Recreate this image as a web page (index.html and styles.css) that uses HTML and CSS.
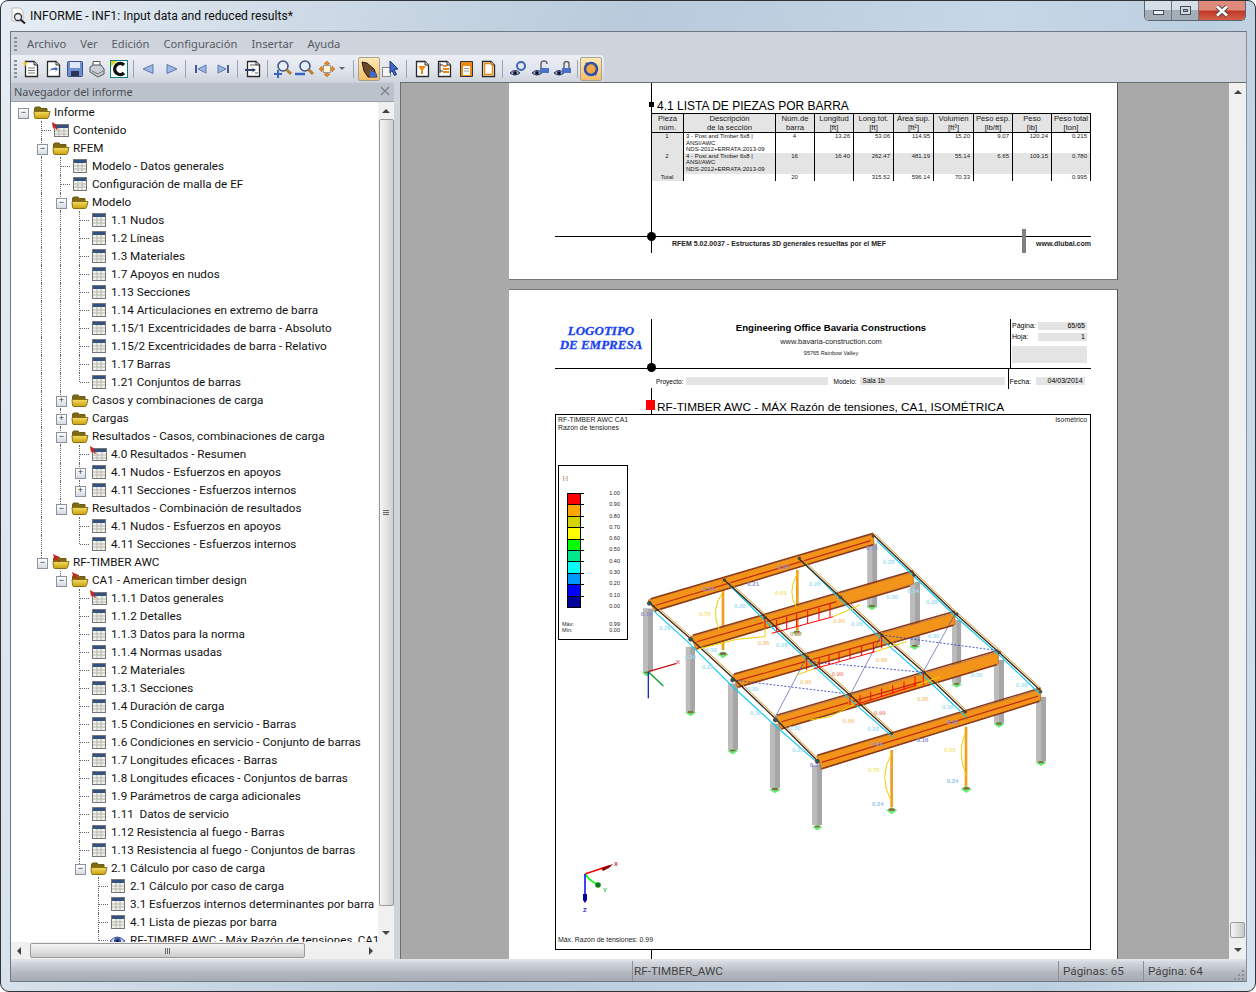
FILE: index.html
```html
<!DOCTYPE html>
<html lang="es">
<head>
<meta charset="utf-8">
<title>INFORME</title>
<link rel="stylesheet" href="styles.css">
</head>
<body>
<svg class="defs" width="0" height="0">
  <defs>
    <linearGradient id="gold" x1="0" y1="0" x2="0" y2="1"><stop offset="0" stop-color="#f6dc62"/><stop offset="1" stop-color="#c9a20e"/></linearGradient>
    <symbol id="tbl" viewBox="0 0 18 16"><rect x="2.500" y="1.500" width="13" height="13" fill="#f2f2ec" stroke="#777"/><rect x="3" y="2" width="12" height="3" fill="#34527f"/><path d="M3 8h12M3 11h12M7 5v9M11 5v9" stroke="#b5b5ad" fill="none"/></symbol>
    <symbol id="pin" viewBox="0 0 18 16"><rect x="2.500" y="2.500" width="14" height="12" fill="#f2f2ec" stroke="#777"/><rect x="3" y="3" width="13" height="3" fill="#34527f"/><path d="M3 9h13M3 12h13M7 6v8M12 6v8" stroke="#b5b5ad" fill="none"/><path d="M0 0l5 3-2 1 3 3-1 1-3-3-1 2z" fill="#d02020"/></symbol>
    <symbol id="fold" viewBox="0 0 18 16"><path d="M1.500 5Q1.500 3 3 3H7L8.500 4.500H14V8H1.500z" fill="#7f6a14" stroke="#6b5a12"/><path d="M1 7.500H17L15.500 13.500Q15 14.500 14 14.500H3Q1.800 14.500 1.500 13.500z" fill="url(#gold)" stroke="#87711a"/></symbol>
    <symbol id="foldp" viewBox="0 0 18 16"><path d="M1.500 5Q1.500 3 3 3H7L8.500 4.500H14V8H1.500z" fill="#7f6a14" stroke="#6b5a12"/><path d="M1 7.500H17L15.500 13.500Q15 14.500 14 14.500H3Q1.800 14.500 1.500 13.500z" fill="url(#gold)" stroke="#87711a"/><path d="M1 0l6 3-2 1 3 3-1 1-3-3-1 2z" fill="#d02020"/></symbol>
    <symbol id="eye" viewBox="0 0 18 16"><path d="M1 9q7-8 15 0q-8 7-15 0z" fill="#c9d8ee" stroke="#3a4f8f"/><circle cx="8.500" cy="9" r="3.500" fill="#3a56a8"/><circle cx="8.500" cy="9" r="1.300" fill="#111"/></symbol>
    <symbol id="doc" viewBox="0 0 18 18"><path d="M3.500 1.500H12L15.500 5V16.500H3.500z" fill="#fff" stroke="#2a2a2a" stroke-width="1.300"/><path d="M12 1.500V5H15.500" fill="#ddd" stroke="#2a2a2a"/></symbol>
    <symbol id="mag" viewBox="0 0 18 18"><circle cx="9" cy="6" r="5" fill="#e6edf6" stroke="#3d4f7a" stroke-width="1.500"/><path d="M12.500 9.500l4.500 4.500" stroke="#b08030" stroke-width="3"/></symbol>
    <symbol id="eyet" viewBox="0 0 20 18"><path d="M1 13q5-5 10 0q-5 4-10 0z" fill="#8ea3d6" stroke="#25305f"/><circle cx="6" cy="13" r="1.800" fill="#111"/></symbol>
    <symbol id="col" viewBox="0 0 30 200" preserveAspectRatio="none"><rect x="0" y="0" width="30" height="200" fill="#a6a6a6"/><rect x="0" y="0" width="15" height="200" fill="#bcbcbc"/></symbol>
    <symbol id="foot" viewBox="0 0 36 24" preserveAspectRatio="none"><path d="M18 2L35 11 18 23 1 11z" fill="#66ee77"/><ellipse cx="18" cy="9" rx="10" ry="4" fill="#8a6a4a"/></symbol>
  </defs>
</svg>
<div class="win">
  <header class="title">
    <svg class="appico" width="18" height="18" viewBox="0 0 18 18"><path d="M2 1H10L13 4V14H2z" fill="#fff" stroke="#bbb"/><circle cx="8" cy="10" r="3.500" fill="#e8eef6" stroke="#333" stroke-width="1.300"/><path d="M10.500 12.500L15 16.500" stroke="#222" stroke-width="2"/></svg>
    <span class="title-text">INFORME - INF1: Input data and reduced results*</span>
    <div class="winbtns">
      <div class="wb wb-min"><i></i></div>
      <div class="wb wb-max"><i></i></div>
      <div class="wb wb-close">
        <svg width="18" height="12" viewBox="0 0 18 12"><path d="M4 1.500L14 10.500M14 1.500L4 10.500" stroke="#4a4a4a" stroke-width="4.500"/><path d="M4 1.500L14 10.500M14 1.500L4 10.500" stroke="#fff" stroke-width="2.600"/></svg>
      </div>
    </div>
  </header>
  <div class="inner">
    <nav class="menu">
      <span class="grip"></span>
      <span>Archivo</span><span>Ver</span><span>Edición</span><span>Configuración</span><span>Insertar</span><span>Ayuda</span>
    </nav>
    <div class="tools">
      <span class="grip"></span>
      <button class="tb"><svg width="18" height="18"><use href="#doc"/><path d="M3 1l1 2 2 .5-2 1-1 2-1-2-2-1 2-.5z" fill="#f4d020"/><path d="M6 8h7M6 10.500h7M6 13h7" stroke="#777"/></svg></button>
      <button class="tb"><svg width="18" height="18"><use href="#doc"/><path d="M5 11q3-4 7-3l-1-2 3 3-3 3 1-2q-4-1-7 1z" fill="#3c68b4"/></svg></button>
      <button class="tb"><svg width="18" height="18" viewBox="0 0 18 18"><rect x="1.500" y="1.500" width="15" height="15" rx="1" fill="#6f8fd0" stroke="#3c4f80"/><rect x="4" y="2" width="10" height="6" fill="#dfe7f6"/><rect x="5" y="11" width="8" height="5" fill="#2b3556"/></svg></button>
      <button class="tb"><svg width="18" height="18" viewBox="0 0 18 18"><path d="M5 1.500H12V7H5z" fill="#fff" stroke="#555"/><path d="M2 7L5 5H13L16 9V14L10 17 2 12z" fill="#c9ced6" stroke="#555"/><path d="M4 11l6 3 5-3" stroke="#777" fill="none"/></svg></button>
      <button class="tb"><svg width="18" height="18" viewBox="0 0 18 18"><rect x=".5" y=".5" width="17" height="17" fill="#fff" stroke="#0b7f78"/><path d="M14 5A5.500 5.500 0 1 0 14 13" fill="none" stroke="#111" stroke-width="3.500"/><path d="M1 1h6L1 7z" fill="#d8d820"/></svg></button>
      <i class="sep"></i>
      <button class="tb"><svg width="18" height="18" viewBox="0 0 18 18"><path d="M3 9L13 4.500V13.500z" fill="#9db8e4" stroke="#5a78b0"/></svg></button>
      <button class="tb"><svg width="18" height="18" viewBox="0 0 18 18"><path d="M15 9L5 4.500V13.500z" fill="#9db8e4" stroke="#5a78b0"/></svg></button>
      <i class="sep"></i>
      <button class="tb"><svg width="18" height="18" viewBox="0 0 18 18"><path d="M4 5V13" stroke="#44598f" stroke-width="2"/><path d="M6 9L14 5V13z" fill="#9db8e4" stroke="#5a78b0"/></svg></button>
      <button class="tb"><svg width="18" height="18" viewBox="0 0 18 18"><path d="M14 5V13" stroke="#44598f" stroke-width="2"/><path d="M12 9L4 5V13z" fill="#9db8e4" stroke="#5a78b0"/></svg></button>
      <i class="sep"></i>
      <button class="tb"><svg width="18" height="18"><use href="#doc"/><path d="M1 9h8l-2-2 5 3-5 3 2-2H1z" fill="#2d3f6b"/><path d="M6 5h6M11 13h3" stroke="#555"/></svg></button>
      <i class="sep"></i>
      <button class="tb"><svg width="20" height="18"><use href="#mag"/><path d="M1 14h8M5 10v8" stroke="#3565c0" stroke-width="2"/></svg></button>
      <button class="tb"><svg width="20" height="18"><use href="#mag"/><path d="M0 14h10" stroke="#3565c0" stroke-width="2.500"/></svg></button>
      <button class="tb tb-drop"><svg width="18" height="18" viewBox="0 0 18 18"><path d="M9 1l3 3h-2v2H8V4H6zM9 17l-3-3h2v-2h2v2h2zM1 9l3-3v2h2v2H4v2zM17 9l-3 3v-2h-2V8h2V6z" fill="#ea8a1e" stroke="#a85a10" stroke-width=".5"/><rect x="5.500" y="5.500" width="7" height="7" fill="#fff3d8" stroke="#999"/></svg><i class="caret"></i></button>
      <i class="sep"></i>
      <button class="tb tb-on"><svg width="20" height="20" viewBox="0 0 20 20"><path d="M3 3l5 1 7 6 3 8H9L5 12z" fill="#6a4a2a" stroke="#2b1c10" stroke-width="1"/><path d="M11 11l6 3 1 4h-7z" fill="#3f69c8"/></svg></button>
      <button class="tb"><svg width="20" height="18" viewBox="0 0 20 18"><rect x="1.500" y="7.500" width="8" height="9" fill="#f4f4f4" stroke="#888"/><path d="M9 1l8 8-4 .5 2.500 5-2 1-2.500-5L9 13z" fill="#3f69c8" stroke="#1f3878"/></svg></button>
      <i class="sep sep-w"></i>
      <button class="tb"><svg width="18" height="18"><use href="#doc"/><path d="M5 6h8L10 10v4H8v-4z" fill="#ee8a12"/></svg></button>
      <button class="tb"><svg width="18" height="18"><use href="#doc"/><path d="M5 3v10M5 5h3M5 11h3" stroke="#333"/><rect x="8" y="8" width="6" height="2" fill="#e88a1a"/><rect x="8" y="11" width="6" height="2" fill="#e88a1a"/><rect x="8" y="5" width="4" height="2" fill="#e88a1a"/></svg></button>
      <button class="tb"><svg width="18" height="18" viewBox="0 0 18 18"><path d="M3.500 1.500H15.500V16.500H3.500z" fill="#ee8a12" stroke="#333"/><path d="M6 6h7v9H6z" fill="#fff"/><path d="M7 8.500h5M7 11h5" stroke="#999"/></svg></button>
      <button class="tb"><svg width="18" height="18"><use href="#doc"/><path d="M5.500 3.500H11.500L13.500 5.500V14.500H5.500z" fill="#fff" stroke="#ee8a12" stroke-width="1.500"/></svg></button>
      <i class="sep sep-e"></i>
      <button class="tb"><svg width="20" height="18"><use href="#eyet"/><circle cx="12" cy="6" r="4" fill="none" stroke="#3c68b4" stroke-width="2"/></svg></button>
      <button class="tb"><svg width="20" height="18"><use href="#eyet"/><path d="M9 8h9v5H9z" fill="#4a72c8"/><path d="M10 8V4a3 3 0 0 1 6 0" fill="none" stroke="#666" stroke-width="1.500"/></svg></button>
      <button class="tb"><svg width="20" height="18"><use href="#eyet"/><path d="M9 8h9v5H9z" fill="#4a72c8"/><path d="M11 8V4a2.500 2.500 0 0 1 5 0V8" fill="none" stroke="#666" stroke-width="1.500"/></svg></button>
      <i class="sep sep-z"></i>
      <button class="tb tb-on"><svg width="18" height="18" viewBox="0 0 18 18"><circle cx="9" cy="9" r="6" fill="#f4a640" stroke="#2d50a8" stroke-width="2.500"/><path d="M4 2l3 3-4 1zM14 16l-3-3 4-1z" fill="#2d50a8"/></svg></button>
    </div>
    <div class="main">
      <aside class="nav">
        <div class="nav-head"><span>Navegador del informe</span><svg width="10" height="10" viewBox="0 0 10 10"><path d="M1 1l8 8M9 1l-8 8" stroke="#7d828a" stroke-width="1.300"/></svg></div>
        <div class="nav-body">
          <div class="tree">
            <div class="row"><i class="r"></i><svg class="ic"><use href="#fold"/></svg><span>Informe</span></div>
            <div class="row"><i class="g"></i><i class="t"></i><svg class="ic"><use href="#pin"/></svg><span>Contenido</span></div>
            <div class="row"><i class="g"></i><i class="m"></i><svg class="ic"><use href="#fold"/></svg><span>RFEM</span></div>
            <div class="row"><i class="g"></i><i class="v"></i><i class="t"></i><svg class="ic"><use href="#tbl"/></svg><span>Modelo - Datos generales</span></div>
            <div class="row"><i class="g"></i><i class="v"></i><i class="t"></i><svg class="ic"><use href="#tbl"/></svg><span>Configuración de malla de EF</span></div>
            <div class="row"><i class="g"></i><i class="v"></i><i class="m"></i><svg class="ic"><use href="#fold"/></svg><span>Modelo</span></div>
            <div class="row"><i class="g"></i><i class="v"></i><i class="v"></i><i class="t"></i><svg class="ic"><use href="#tbl"/></svg><span>1.1 Nudos</span></div>
            <div class="row"><i class="g"></i><i class="v"></i><i class="v"></i><i class="t"></i><svg class="ic"><use href="#tbl"/></svg><span>1.2 Líneas</span></div>
            <div class="row"><i class="g"></i><i class="v"></i><i class="v"></i><i class="t"></i><svg class="ic"><use href="#tbl"/></svg><span>1.3 Materiales</span></div>
            <div class="row"><i class="g"></i><i class="v"></i><i class="v"></i><i class="t"></i><svg class="ic"><use href="#tbl"/></svg><span>1.7 Apoyos en nudos</span></div>
            <div class="row"><i class="g"></i><i class="v"></i><i class="v"></i><i class="t"></i><svg class="ic"><use href="#tbl"/></svg><span>1.13 Secciones</span></div>
            <div class="row"><i class="g"></i><i class="v"></i><i class="v"></i><i class="t"></i><svg class="ic"><use href="#tbl"/></svg><span>1.14 Articulaciones en extremo de barra</span></div>
            <div class="row"><i class="g"></i><i class="v"></i><i class="v"></i><i class="t"></i><svg class="ic"><use href="#tbl"/></svg><span>1.15/1 Excentricidades de barra - Absoluto</span></div>
            <div class="row"><i class="g"></i><i class="v"></i><i class="v"></i><i class="t"></i><svg class="ic"><use href="#tbl"/></svg><span>1.15/2 Excentricidades de barra - Relativo</span></div>
            <div class="row"><i class="g"></i><i class="v"></i><i class="v"></i><i class="t"></i><svg class="ic"><use href="#tbl"/></svg><span>1.17 Barras</span></div>
            <div class="row"><i class="g"></i><i class="v"></i><i class="v"></i><i class="l"></i><svg class="ic"><use href="#tbl"/></svg><span>1.21 Conjuntos de barras</span></div>
            <div class="row"><i class="g"></i><i class="v"></i><i class="p"></i><svg class="ic"><use href="#fold"/></svg><span>Casos y combinaciones de carga</span></div>
            <div class="row"><i class="g"></i><i class="v"></i><i class="p"></i><svg class="ic"><use href="#fold"/></svg><span>Cargas</span></div>
            <div class="row"><i class="g"></i><i class="v"></i><i class="m"></i><svg class="ic"><use href="#fold"/></svg><span>Resultados - Casos, combinaciones de carga</span></div>
            <div class="row"><i class="g"></i><i class="v"></i><i class="v"></i><i class="t"></i><svg class="ic"><use href="#pin"/></svg><span>4.0 Resultados - Resumen</span></div>
            <div class="row"><i class="g"></i><i class="v"></i><i class="v"></i><i class="p"></i><svg class="ic"><use href="#tbl"/></svg><span>4.1 Nudos - Esfuerzos en apoyos</span></div>
            <div class="row"><i class="g"></i><i class="v"></i><i class="v"></i><i class="lp"></i><svg class="ic"><use href="#tbl"/></svg><span>4.11 Secciones - Esfuerzos internos</span></div>
            <div class="row"><i class="g"></i><i class="v"></i><i class="ml"></i><svg class="ic"><use href="#fold"/></svg><span>Resultados - Combinación de resultados</span></div>
            <div class="row"><i class="g"></i><i class="v"></i><i class="g"></i><i class="t"></i><svg class="ic"><use href="#tbl"/></svg><span>4.1 Nudos - Esfuerzos en apoyos</span></div>
            <div class="row"><i class="g"></i><i class="v"></i><i class="g"></i><i class="l"></i><svg class="ic"><use href="#tbl"/></svg><span>4.11 Secciones - Esfuerzos internos</span></div>
            <div class="row"><i class="g"></i><i class="ml"></i><svg class="ic"><use href="#foldp"/></svg><span>RF-TIMBER AWC</span></div>
            <div class="row"><i class="g"></i><i class="g"></i><i class="ml"></i><svg class="ic"><use href="#foldp"/></svg><span>CA1 - American timber design</span></div>
            <div class="row"><i class="g"></i><i class="g"></i><i class="g"></i><i class="t"></i><svg class="ic"><use href="#pin"/></svg><span>1.1.1 Datos generales</span></div>
            <div class="row"><i class="g"></i><i class="g"></i><i class="g"></i><i class="t"></i><svg class="ic"><use href="#tbl"/></svg><span>1.1.2 Detalles</span></div>
            <div class="row"><i class="g"></i><i class="g"></i><i class="g"></i><i class="t"></i><svg class="ic"><use href="#tbl"/></svg><span>1.1.3 Datos para la norma</span></div>
            <div class="row"><i class="g"></i><i class="g"></i><i class="g"></i><i class="t"></i><svg class="ic"><use href="#tbl"/></svg><span>1.1.4 Normas usadas</span></div>
            <div class="row"><i class="g"></i><i class="g"></i><i class="g"></i><i class="t"></i><svg class="ic"><use href="#tbl"/></svg><span>1.2 Materiales</span></div>
            <div class="row"><i class="g"></i><i class="g"></i><i class="g"></i><i class="t"></i><svg class="ic"><use href="#tbl"/></svg><span>1.3.1 Secciones</span></div>
            <div class="row"><i class="g"></i><i class="g"></i><i class="g"></i><i class="t"></i><svg class="ic"><use href="#tbl"/></svg><span>1.4 Duración de carga</span></div>
            <div class="row"><i class="g"></i><i class="g"></i><i class="g"></i><i class="t"></i><svg class="ic"><use href="#tbl"/></svg><span>1.5 Condiciones en servicio - Barras</span></div>
            <div class="row"><i class="g"></i><i class="g"></i><i class="g"></i><i class="t"></i><svg class="ic"><use href="#tbl"/></svg><span>1.6 Condiciones en servicio - Conjunto de barras</span></div>
            <div class="row"><i class="g"></i><i class="g"></i><i class="g"></i><i class="t"></i><svg class="ic"><use href="#tbl"/></svg><span>1.7 Longitudes eficaces - Barras</span></div>
            <div class="row"><i class="g"></i><i class="g"></i><i class="g"></i><i class="t"></i><svg class="ic"><use href="#tbl"/></svg><span>1.8 Longitudes eficaces - Conjuntos de barras</span></div>
            <div class="row"><i class="g"></i><i class="g"></i><i class="g"></i><i class="t"></i><svg class="ic"><use href="#tbl"/></svg><span>1.9 Parámetros de carga adicionales</span></div>
            <div class="row"><i class="g"></i><i class="g"></i><i class="g"></i><i class="t"></i><svg class="ic"><use href="#tbl"/></svg><span>1.11 &nbsp;Datos de servicio</span></div>
            <div class="row"><i class="g"></i><i class="g"></i><i class="g"></i><i class="t"></i><svg class="ic"><use href="#tbl"/></svg><span>1.12 Resistencia al fuego - Barras</span></div>
            <div class="row"><i class="g"></i><i class="g"></i><i class="g"></i><i class="t"></i><svg class="ic"><use href="#tbl"/></svg><span>1.13 Resistencia al fuego - Conjuntos de barras</span></div>
            <div class="row"><i class="g"></i><i class="g"></i><i class="g"></i><i class="ml"></i><svg class="ic"><use href="#fold"/></svg><span>2.1 Cálculo por caso de carga</span></div>
            <div class="row"><i class="g"></i><i class="g"></i><i class="g"></i><i class="g"></i><i class="t"></i><svg class="ic"><use href="#tbl"/></svg><span>2.1 Cálculo por caso de carga</span></div>
            <div class="row"><i class="g"></i><i class="g"></i><i class="g"></i><i class="g"></i><i class="t"></i><svg class="ic"><use href="#tbl"/></svg><span>3.1 Esfuerzos internos determinantes por barra</span></div>
            <div class="row"><i class="g"></i><i class="g"></i><i class="g"></i><i class="g"></i><i class="t"></i><svg class="ic"><use href="#tbl"/></svg><span>4.1 Lista de piezas por barra</span></div>
            <div class="row"><i class="g"></i><i class="g"></i><i class="g"></i><i class="g"></i><i class="t"></i><svg class="ic"><use href="#eye"/></svg><span>RF-TIMBER AWC - Máx Razón de tensiones, CA1, ISOMÉTRICA</span></div>
          </div>
          <div class="vbar">
            <span class="arr arr-up"></span>
            <div class="thumb thumb-tree"><i></i><i></i><i></i></div>
            <span class="arr arr-down"></span>
          </div>
        </div>
        <div class="hwrap">
          <div class="hbar">
            <span class="arr arr-left"></span>
            <div class="thumb thumb-h"><i></i><i></i><i></i></div>
            <span class="arr arr-right"></span>
          </div>
        </div>
      </aside>
      <section class="viewer">
        <div class="pages">
          <article class="page page-a">
            <i class="vline vline-a"></i>
            <i class="sq sq-a"></i>
            <i class="dot dot-a"></i>
            <div class="content">
              <h2 class="h-list">4.1 LISTA DE PIEZAS POR BARRA</h2>
              <table class="parts">
                <colgroup><col class="c1"><col class="c2"><col class="c3"><col class="c3"><col class="c4"><col class="c4"><col class="c4"><col class="c3"><col class="c3"><col class="c3"></colgroup>
                <thead>
                  <tr><th>Pieza<br>núm.</th><th>Descripción<br>de la sección</th><th>Núm.de<br>barra</th><th>Longitud<br>[ft]</th><th>Long.tot.<br>[ft]</th><th>Área sup.<br>[ft²]</th><th>Volumen<br>[ft³]</th><th>Peso esp.<br>[lb/ft]</th><th>Peso<br>[lb]</th><th>Peso total<br>[ton]</th></tr>
                </thead>
                <tbody>
                  <tr class="r1"><td class="id">1</td><td class="desc">3 - Post and Timber 6x8 |<br>ANSI/AWC<br>NDS-2012+ERRATA:2013-09</td><td class="ctr">4</td><td>13.26</td><td>53.06</td><td>114.95</td><td>15.20</td><td>9.07</td><td>120.24</td><td>0.215</td></tr>
                  <tr class="r2"><td class="id">2</td><td class="desc">4 - Post and Timber 6x8 |<br>ANSI/AWC<br>NDS-2012+ERRATA:2013-09</td><td class="ctr">16</td><td>16.40</td><td>262.47</td><td>481.19</td><td>55.14</td><td>6.65</td><td>109.15</td><td>0.780</td></tr>
                  <tr class="r3"><td class="id">Total</td><td></td><td class="ctr">20</td><td></td><td>315.52</td><td>596.14</td><td>70.33</td><td></td><td></td><td>0.995</td></tr>
                </tbody>
              </table>
            </div>
            <footer class="pfoot">
              <b class="pf-main">RFEM 5.02.0037 - Estructuras 3D generales resueltas por el MEF</b>
              <i class="pf-bar"></i>
              <b class="pf-url">www.dlubal.com</b>
            </footer>
          </article>
          <article class="page page-b">
            <i class="dot dot-b"></i>
            <i class="vline vline-b1"></i>
            <i class="vline vline-b2"></i>
            <div class="phead">
              <div class="logo">LOGOTIPO<br>DE EMPRESA</div>
              <div class="office">
                <strong>Engineering Office Bavaria Constructions</strong>
                <span class="web">www.bavaria-construction.com</span>
                <span class="addr">95765 Rainbow Valley</span>
              </div>
              <div class="meta">
                <div class="mrow"><label>Página:</label><span>65/65</span></div>
                <div class="mrow"><label>Hoja:</label><span>1</span></div>
                <div class="mblock"></div>
              </div>
            </div>
            <div class="pinfo">
              <label>Proyecto:</label><span class="f f1"></span>
              <label>Modelo:</label><span class="f f2">Sala 1b</span>
              <div class="fdate"><label>Fecha:</label><span>04/03/2014</span></div>
            </div>
            <h2 class="h-fig"><i class="red"></i>RF-TIMBER AWC - MÁX Razón de tensiones, CA1, ISOMÉTRICA</h2>
            <div class="figure">
              <div class="fig-top"><div>RF-TIMBER AWC CA1<br>Razón de tensiones</div><div>Isométrico</div></div>
              <div class="legend">
                <div class="lg-unit">[-]</div>
                <div class="lg-main">
                  <div class="lg-bar"><i class="k0"></i><i class="k1"></i><i class="k2"></i><i class="k3"></i><i class="k4"></i><i class="k5"></i><i class="k6"></i><i class="k7"></i><i class="k8"></i><i class="k9"></i></div>
                  <div class="lg-vals"><span>1.00</span><span>0.90</span><span>0.80</span><span>0.70</span><span>0.60</span><span>0.50</span><span>0.40</span><span>0.30</span><span>0.20</span><span>0.10</span><span>0.00</span></div>
                </div>
                <div class="lg-mm"><span>Máx:</span><span>0.99</span></div>
                <div class="lg-mm"><span>Mín:</span><span>0.00</span></div>
              </div>
              <svg class="model" width="430" height="320" viewBox="0 0 1290 960">
                <use href="#col" x="39" y="265" width="30" height="190"/>
                <use href="#col" x="167" y="380" width="28" height="195"/>
                <use href="#col" x="294" y="490" width="30" height="200"/>
                <use href="#col" x="420" y="610" width="30" height="195"/>
                <use href="#col" x="546" y="735" width="30" height="180"/>
                <use href="#col" x="712" y="70" width="30" height="190"/>
                <use href="#col" x="840" y="185" width="30" height="190"/>
                <use href="#col" x="966" y="300" width="28" height="190"/>
                <use href="#col" x="1092" y="420" width="30" height="190"/>
                <use href="#col" x="1218" y="530" width="30" height="195"/>
                <g class="ocol"><path d="M279 210V390M502 150V332M785 690V862M1008 620V800"/></g>
                <use href="#foot" x="35" y="450" width="30" height="20"/>
                <use href="#foot" x="165" y="568" width="34" height="22"/>
                <use href="#foot" x="291" y="684" width="34" height="20"/>
                <use href="#foot" x="417" y="799" width="36" height="22"/>
                <use href="#foot" x="546" y="912" width="32" height="20"/>
                <use href="#foot" x="708" y="250" width="36" height="22"/>
                <use href="#foot" x="836" y="370" width="36" height="20"/>
                <use href="#foot" x="963" y="484" width="34" height="20"/>
                <use href="#foot" x="1090" y="602" width="34" height="22"/>
                <use href="#foot" x="1216" y="719" width="34" height="20"/>
                <use href="#foot" x="261" y="392" width="36" height="24"/>
                <use href="#foot" x="484" y="328" width="34" height="22"/>
                <use href="#foot" x="767" y="860" width="36" height="24"/>
                <use href="#foot" x="991" y="796" width="36" height="24"/>
                <g class="bm">
                  <path d="M55 240L730 42 732 72 75 274z"/>
                  <path d="M183 350L850 155 850 192 198 388z"/>
                  <path d="M308 465L975 278 975 314 323 503z"/>
                  <path d="M438 590L1105 395 1105 432 453 628z"/>
                  <path d="M560 708L1232 508 1232 542 573 748z"/>
                </g>
                <g class="br">
                  <path d="M70 258L722 62M198 366L400 307M410 304L620 245M322 482L525 425M540 420L750 362M452 606L655 548M668 544L875 485M575 727L1225 528"/>
                </g>
                <g class="bo">
                  <path d="M75 272L730 74M200 386L840 198M325 501L970 316M455 626L1100 434M575 746L1228 544"/>
                  <path d="M62 236L730 40M188 346L850 152M312 462L975 274M440 586L1105 391M562 706L1232 504"/>
                </g>
                <g class="cy">
                  <path d="M70 272L175 367 300 492 430 612 555 722M295 192L415 312 540 427 670 547 790 652M520 127L640 247 765 367 890 477 1010 592M740 62L860 177 985 297 1115 412 1230 522"/>
                </g>
                <g class="pu">
                  <path d="M55 245L180 355 305 470 435 595 560 720M283 180L405 290 530 410 660 525 785 640M505 115L630 230 755 345 880 455 1005 575M730 45L850 160 975 280 1105 395 1230 510"/>
                </g>
                <g class="pu2">
                  <path d="M59 241L184 351 309 466 439 591 564 716M287 176L409 286 534 406 664 521 789 636M509 111L634 226 759 341 884 451 1009 571M734 41L854 156 979 276 1109 391 1234 506"/>
                </g>
                <g class="na">
                  <path d="M435 592L530 412M660 525L755 345M880 455L975 282"/>
                </g>
                <g class="dsh">
                  <path d="M310 480L640 520M755 345L1105 392M540 425L880 457"/>
                </g>
                <g class="rd">
                  <path d="M425 340L610 290M440 335V300M470 327V290M500 318V282M533 310V273M567 300V264M600 292V252"/>
                  <path d="M550 447L735 395M568 442V415M597 433V405M627 425V396M660 416V387M695 406V378M730 396V367"/>
                  <path d="M675 555L860 495M690 551V525M722 541V515M755 531V505M788 521V496M822 508V484M855 497V470"/>
                  <path d="M405 290V325M530 412V450M660 525V555M755 345V385M880 460V495"/>
                </g>
                <g class="yl">
                  <path d="M205 387L320 358 405 350V325M610 290L690 255M550 447L500 465M735 395L830 365M670 555L600 590 540 600M860 495L930 470"/>
                  <path d="M279 215Q240 270 268 330M502 160Q470 220 500 262M785 700Q745 770 782 840M1005 640Q980 700 1010 770"/>
                </g>
                <g class="axs">
                  <path class="ax-r" d="M55 455L140 430"/>
                  <path class="ax-g" d="M55 455L100 498"/>
                  <path class="ax-b" d="M55 455V535"/>
                </g>
                <g class="lb lb-b">
                  <text x="87" y="329">0.28</text><text x="758" y="131">0.28</text><text x="537" y="198">0.28</text><text x="312" y="263">0.28</text><text x="888" y="251">0.28</text><text x="663" y="317">0.28</text><text x="438" y="381">0.28</text><text x="216" y="446">0.28</text><text x="1158" y="501">0.28</text><text x="936" y="567">0.28</text><text x="712" y="632">0.28</text><text x="487" y="697">0.28</text><text x="360" y="585">0.30</text><text x="769" y="237">0.30</text><text x="226" y="395">0.30</text><text x="893" y="354">0.30</text><text x="351" y="512">0.30</text><text x="1022" y="471">0.30</text><text x="477" y="630">0.30</text><text x="163" y="416">0.34</text><text x="832" y="218">0.34</text>
                </g>
                <g class="lb lb-y">
                  <text x="207" y="288">0.75</text><text x="435" y="225">0.63</text><text x="714" y="755">0.75</text><text x="942" y="696">0.55</text>
                </g>
                <g class="lb lb-o">
                  <text x="383" y="374">0.86</text><text x="610" y="309">0.86</text><text x="510" y="491">0.86</text><text x="737" y="426">0.86</text><text x="638" y="608">0.86</text><text x="861" y="542">0.86</text>
                </g>
                <g class="lb lb-r">
                  <text x="480" y="349">0.99</text><text x="605" y="467">0.99</text><text x="732" y="584">0.99</text>
                </g>
                <g class="lb lb-s">
                  <text x="726" y="857">0.24</text><text x="950" y="789">0.24</text>
                </g>
                <g class="lb lb-p">
                  <text x="32" y="288">0.16</text><text x="708" y="91">0.16</text><text x="218" y="213">0.24</text><text x="443" y="148">0.24</text><text x="352" y="197">0.21</text><text x="725" y="678">0.24</text><text x="950" y="613">0.24</text><text x="860" y="665">0.16</text><text x="540" y="740">0.21</text>
                </g>
                <text class="lb lb-xr" x="138" y="433">X</text>
                <g class="nd">
                  <circle cx="58" cy="250" r="6"/><circle cx="182" cy="358" r="6"/><circle cx="308" cy="480" r="6"/><circle cx="436" cy="600" r="6"/><circle cx="562" cy="724" r="6"/>
                  <circle cx="283" cy="180" r="4"/><circle cx="405" cy="292" r="4"/><circle cx="532" cy="412" r="4"/><circle cx="660" cy="525" r="4"/><circle cx="785" cy="640" r="4"/>
                  <circle cx="508" cy="115" r="4"/><circle cx="632" cy="232" r="4"/><circle cx="756" cy="346" r="4"/><circle cx="882" cy="458" r="4"/><circle cx="1006" cy="576" r="4"/>
                  <circle cx="730" cy="48" r="4"/><circle cx="852" cy="165" r="4"/><circle cx="980" cy="282" r="4"/><circle cx="1108" cy="398" r="4"/><circle cx="1232" cy="515" r="4"/>
                </g>
              </svg>
              <svg class="axes" width="50" height="56" viewBox="0 0 50 56">
                <path d="M8 11L32 3" stroke="#f00" stroke-width="1.500"/><path d="M24 5L36 1 32 5 26 8z" fill="#8b0000"/>
                <path d="M8 11Q13 18 20 21" stroke="#0f0" stroke-width="1.500" fill="none"/><circle cx="21" cy="22" r="2.800" fill="#0a7a1a"/>
                <path d="M8 11V38" stroke="#00f" stroke-width="1.500"/><path d="M6 31h4v6l-2 3-2-3z" fill="#00009a"/>
                <text class="ax-t ax-tx" x="37" y="3">X</text><text class="ax-t ax-ty" x="26" y="29">Y</text><text class="ax-t ax-tz" x="6" y="49">Z</text>
              </svg>
              <div class="fig-bottom">Máx. Razón de tensiones: 0.99</div>
            </div>
          </article>
        </div>
        <div class="vbar vbar-view">
          <span class="arr arr-up"></span>
          <div class="track"><div class="thumb thumb-view"></div></div>
          <span class="arr arr-down"></span>
        </div>
      </section>
    </div>
    <footer class="status">
      <span class="st st-a"></span>
      <span class="st st-b">RF-TIMBER_AWC</span>
      <span class="st st-c">Páginas: 65</span>
      <span class="st st-d">Página: 64</span>
      <svg class="rsz" width="12" height="12" viewBox="0 0 12 12"><path d="M9 2h2v2H9zM5 6h2v2H5zM9 6h2v2H9zM1 10h2v2H1zM5 10h2v2H5zM9 10h2v2H9z" fill="#8a8f97"/></svg>
    </footer>
  </div>
</div>
</body>
</html>
```
FILE: styles.css
```css
* { box-sizing: border-box; }
html, body { margin: 0; padding: 0; }
body { width: 1256px; height: 992px; overflow: hidden; background: #fff; font-family: "Noto Sans", "Liberation Sans", sans-serif; }
.defs { position: absolute; }
.win {
  width: 1256px; height: 992px; display: flex; flex-direction: column;
  padding: 0 8px 9px 9px; border: 1px solid #2e3338; border-radius: 8px 8px 9px 9px;
  background: linear-gradient(100deg, #e6edf4 0%, #cfdbe7 20%, #b8cadb 45%, #c6d7e7 70%, #bccfe0 85%, #d6e4f0 100%);
}
.title { height: 30px; flex: none; display: flex; align-items: center; margin-left: -1px; position: relative; }
.appico { margin: 0 2px 0 1px; flex: none; }
.title-text { font-family: Roboto, sans-serif; font-size: 12.200px; color: #111; white-space: nowrap; }
.winbtns { margin-left: auto; margin-right: 1px; align-self: flex-start; display: flex; height: 20px; border: 1px solid #5a6470; border-top: 0; border-radius: 0 0 5px 5px; overflow: hidden; }
.wb { display: flex; align-items: center; justify-content: center; height: 100%; }
.wb-min { width: 27px; background: linear-gradient(#d6dee7 0 50%, #a4aeb9 50% 100%); border-right: 1px solid #6d7680; }
.wb-min i { width: 11px; height: 5px; background: #eef2f6; border: 1px solid #454c55; margin-top: 4px; }
.wb-max { width: 27px; background: linear-gradient(#d6dee7 0 50%, #a4aeb9 50% 100%); border-right: 1px solid #6d7680; }
.wb-max i { width: 11px; height: 9px; border: 1px solid #454c55; box-shadow: inset 0 0 0 2px #d0d8e0, inset 0 0 0 3px #454c55; }
.wb-close { width: 46px; background: linear-gradient(#e08a7c 0 45%, #c23a28 55%, #d25f48 100%); }

.inner { flex: 1; min-height: 0; display: flex; flex-direction: column; border: 1px solid #6f7782; border-right-color: #8a919b; background: #cfd3dc; }
.grip { width: 3px; height: 18px; flex: none; background: repeating-linear-gradient(#8b8f96 0 2px, transparent 2px 4px); margin-left: 3px; }
.menu { height: 23px; flex: none; display: flex; align-items: center; gap: 14px; font-size: 11.200px; color: #555b64; background: #cfd3dc; }
.menu .grip { margin-right: -4px; height: 14px; }
.tools { height: 27px; flex: none; display: flex; align-items: center; background: linear-gradient(#eceff5, #dfe3ec 60%, #cfd3dc); border-radius: 0 4px 0 0; width: 593px; }
.tools .grip { margin-right: 3px; }
.tb { width: 22px; height: 24px; padding: 0; border: 1px solid transparent; background: none; display: flex; align-items: center; justify-content: center; flex: none; }
.tb-drop { width: 34px; justify-content: flex-start; padding-left: 1px; }
.caret { margin-left: 3px; border: 3px solid transparent; border-top: 3px solid #666; border-bottom: 0; }
.tb-on { background: linear-gradient(#ffe9b8, #f4bd6a); border-color: #a9a28f; border-radius: 2px; }
.sep { width: 1px; height: 18px; flex: none; background: #9ea3ad; margin: 0 4px 0 3px; }
.sep-w { margin: 0 4px 0 4px; }
.sep-e { margin: 0 5px 0 3px; }
.sep-z { margin: 0 2px 0 3px; }

.main { flex: 1; min-height: 0; display: flex; background: #cfd3dc; border-bottom: 2px solid #dfe2e8; }
.nav { width: 383px; margin-right: 6px; flex: none; display: flex; flex-direction: column; }
.nav-head { height: 20px; flex: none; display: flex; align-items: center; justify-content: space-between; padding: 0 4px 2px 3px; background: #bcc2cc; color: #4a4e55; font-size: 10.900px; border-top: 1px solid #c9cdd5; border-bottom: 1px solid #9aa0a9; }
.nav-body { flex: 1; min-height: 0; display: flex; background: #fff; }
.tree { flex: 1; min-width: 0; overflow: hidden; padding: 1px 0 0 2px; font-family: Roboto, sans-serif; font-size: 11.700px; color: #111; background: #fff; }
.row { height: 18px; display: flex; align-items: center; white-space: nowrap; }
.row i { width: 19px; height: 18px; flex: none; position: relative; }
.row span { margin-left: 3px; line-height: 18px; }
.ic { width: 18px; height: 16px; flex: none; margin-left: 1px; }
.v::before, .t::before, .m::before, .p::before { content: ""; position: absolute; left: 9px; top: 0; bottom: 0; border-left: 1px dotted #666; }
.l::before, .ml::before, .lp::before { content: ""; position: absolute; left: 9px; top: 0; height: 9px; border-left: 1px dotted #666; }
.t::after, .l::after { content: ""; position: absolute; left: 10px; top: 9px; width: 9px; border-top: 1px dotted #666; }
.m::after, .ml::after, .r::after, .p::after, .lp::after { content: "\2212"; position: absolute; left: 5px; top: 5px; width: 9px; height: 9px; border: 1px solid #8b949e; background: linear-gradient(#fff, #d6dbe2); font: 9px/7px "Liberation Sans", sans-serif; color: #333; text-align: center; }
.p::after, .lp::after { content: "+"; }

.vbar { width: 16px; flex: none; display: flex; flex-direction: column; align-items: center; background: #f0f0f0; position: relative; }
.arr { flex: none; display: block; width: 0; height: 0; }
.arr-up { border: 4px solid transparent; border-bottom: 4px solid #444; border-top: 0; margin: 7px 0 6px; }
.arr-down { border: 4px solid transparent; border-top: 4px solid #444; border-bottom: 0; margin: auto 0 7px; }
.arr-left { border: 4px solid transparent; border-right: 4px solid #444; border-left: 0; margin: 0 9px 0 6px; }
.arr-right { border: 4px solid transparent; border-left: 4px solid #444; border-right: 0; margin: 0 5px 0 auto; }
.thumb { background: linear-gradient(90deg, #f5f5f5, #e4e4e4 50%, #cfcfcf); border: 1px solid #9a9a9a; border-radius: 2px; }
.thumb-tree { width: 15px; height: 787px; flex: none; display: flex; flex-direction: column; justify-content: center; align-items: center; gap: 1px; }
.thumb-tree i { width: 6px; height: 1px; background: #666; }
.hwrap { height: 17px; flex: none; background: #f0f0f0; padding-right: 16px; }
.hbar { height: 17px; display: flex; align-items: center; }
.thumb-h { width: 275px; height: 15px; background: linear-gradient(#f5f5f5, #e2e2e2 50%, #cbcbcb); display: flex; justify-content: center; align-items: center; gap: 1px; }
.thumb-h i { width: 1px; height: 6px; background: #666; }

.viewer { flex: 1; min-width: 0; display: flex; background: #a9a9a9; border-left: 1px solid #6d6d6d; border-top: 1px solid #6d6d6d; overflow: hidden; }
.pages { flex: 1; min-width: 0; padding-left: 108px; overflow: hidden; }
.page { position: relative; width: 609px; background: #fff; border-right: 1px solid #555; border-bottom: 1px solid #777; font-family: "Liberation Sans", sans-serif; color: #000; }
.page-a { height: 197px; }
.page-b { height: 700px; margin-top: 9px; padding-top: 29px; border-top: 1px solid #777; }
.vline { position: absolute; left: 142px; width: 1px; background: #000; }
.vline-a { top: 0; height: 170px; }
.vline-b1 { top: 98px; height: 26px; }
.vline-b2 { top: 660px; height: 12px; }
.sq { position: absolute; left: 140px; top: 19px; width: 5px; height: 5px; background: #000; }
.dot { position: absolute; left: 138px; width: 9px; height: 9px; border-radius: 50%; background: #000; }
.dot-a { top: 149px; }
.dot-b { top: 73px; }
.content { padding: 16px 0 0 148px; }
.h-list { margin: 0; font-size: 12px; font-weight: 400; line-height: 14px; height: 14px; }
.parts { margin-left: -6px; width: 439px; table-layout: fixed; border-collapse: collapse; font-size: 7.700px; border-top: 1px solid #000; }
.c1 { width: 32px; } .c2 { width: 92px; } .c3 { width: 39px; } .c4 { width: 40px; }
.parts th { background: #e4e4e4; font-weight: 400; height: 19px; padding: 0; line-height: 9px; border-right: 1px solid #000; border-left: 1px solid #000; border-bottom: 1px solid #000; color: #222; overflow: hidden; white-space: nowrap; }
.parts td { padding: 0 3px 0 2px; vertical-align: top; text-align: right; font-size: 6px; line-height: 6.600px; color: #222; border-right: 1px solid #000; border-left: 1px solid #000; white-space: nowrap; overflow: hidden; }
.parts td.id { background: #e4e4e4; text-align: center; }
.parts td.desc { text-align: left; color: #111; }
.parts td.ctr { text-align: center; }
.r1 td { height: 20px; }
.r2 td { height: 21px; background: #e4e4e4; }
.r3 td { height: 7px; }
.pfoot { position: absolute; left: 46px; top: 153px; width: 536px; height: 17px; border-top: 1px solid #000; display: flex; align-items: flex-start; font-size: 7px; padding-left: 117px; padding-top: 3px; }
.pf-main { white-space: nowrap; color: #222; }
.pf-bar { width: 4px; height: 24px; background: #808080; margin: -11px 0 0 auto; flex: none; }
.pf-url { margin-left: 10px; white-space: nowrap; color: #222; }

.phead { margin-left: 46px; width: 536px; height: 50px; display: flex; border-bottom: 1px solid #000; }
.logo { width: 97px; flex: none; border-right: 1px solid #000; font: italic 700 13px/13.500px "Liberation Serif", serif; color: #1b43ee; text-align: center; padding: 5px 4px 0 0; white-space: nowrap; -webkit-text-stroke: .3px #1b43ee; }
.office { flex: 1; display: flex; flex-direction: column; align-items: center; font-size: 9.600px; padding-top: 3px; }
.office strong { line-height: 12px; }
.office .web { font-size: 7.500px; line-height: 15px; color: #222; }
.office .addr { font-size: 5.500px; line-height: 9px; color: #222; }
.meta { width: 81px; flex: none; border-left: 1px solid #000; padding: 3px 4px 0 1px; font-size: 7px; }
.mrow { display: flex; height: 8px; margin-bottom: 3px; line-height: 8px; }
.mrow label { width: 26px; flex: none; }
.mrow span { flex: 1; background: #e4e4e4; text-align: right; padding-right: 2px; }
.mblock { height: 17px; margin-top: 5px; background: #e4e4e4; }
.pinfo { margin-left: 147px; width: 435px; height: 20px; padding-top: 4px; display: flex; align-items: center; font-size: 6.500px; }
.pinfo label { flex: none; }
.pinfo .f { background: #e4e4e4; height: 8px; line-height: 8px; padding-left: 3px; flex: none; }
.f1 { width: 142px; margin: 0 5px 0 3px; }
.f2 { width: 145px; margin: 0 3px 0 3px; }
.fdate { width: 81px; height: 20px; align-self: flex-start; margin-top: -4px; display: flex; align-items: center; border-left: 1px solid #000; padding: 4px 4px 0 1px; font-size: 7px; }
.fdate label { width: 26px; }
.fdate span { flex: 1; height: 8px; line-height: 8px; background: #e4e4e4; text-align: right; padding-right: 2px; }
.h-fig { margin: 11px 0 0 137px; height: 14px; display: flex; align-items: center; font-size: 11.800px; font-weight: 400; white-space: nowrap; position: relative; }
.red { width: 9px; height: 10px; background: #f00; margin-right: 2px; flex: none; margin-top: -4px; }
.figure { position: relative; margin-left: 46px; width: 536px; height: 536px; border: 1px solid #000; background: #fff; font-size: 6.900px; color: #222; overflow: hidden; }
.fig-top { display: flex; justify-content: space-between; padding: 1px 3px 0 2px; line-height: 8px; }
.legend { position: absolute; left: 2px; top: 50px; width: 70px; height: 175px; border: 1px solid #000; padding: 9px 6px 0 3px; font-size: 5.500px; background: #fff; }
.lg-unit { color: #8a3a10; height: 18px; padding-left: 1px; }
.lg-main { display: flex; height: 122px; }
.lg-bar { width: 14px; margin-left: 5px; height: 115px; display: flex; flex-direction: column; border-left: 1px solid #000; border-right: 1px solid #000; border-bottom: 1px solid #000; }
.lg-bar i { flex: 1; border-top: 1px solid #000; position: relative; }
.lg-bar i::after { content: ""; position: absolute; left: 12px; top: -1px; width: 4px; height: 1px; background: #000; }
.k0 { background: #f00; } .k1 { background: #ffa500; } .k2 { background: #d4d400; } .k3 { background: #ff0; } .k4 { background: #0f0; } .k5 { background: #00e68c; } .k6 { background: #0ff; } .k7 { background: #09f; } .k8 { background: #00f; } .k9 { background: #00009a; }
.lg-vals { margin-left: auto; margin-right: 1px; display: flex; flex-direction: column; justify-content: space-between; height: 119px; margin-top: -3px; line-height: 6px; }
.lg-mm { display: flex; justify-content: space-between; padding-right: 1px; line-height: 6px; }
.lg-main + .lg-mm { margin-top: 6px; }
.model { position: absolute; left: 74px; top: 105px; }
.ocol path { stroke: #f0a020; stroke-width: 8; fill: none; }
.bm path { fill: #f2931a; stroke: #a65a1e; stroke-width: 2; }
.br path { fill: none; stroke: #c02810; stroke-width: 3.500; }
.bo path { fill: none; stroke: #8c3a18; stroke-width: 4.500; }
.cy path { fill: none; stroke: #16c8ec; stroke-width: 3.500; }
.pu path { fill: none; stroke: #3a2a18; stroke-width: 4; }
.pu2 path { fill: none; stroke: #e0962a; stroke-width: 3; }
.na path { fill: none; stroke: #4a52a0; stroke-width: 2; }
.dsh path { fill: none; stroke: #2a3ac0; stroke-width: 2.500; stroke-dasharray: 6 5; }
.rd path { fill: none; stroke: #f00; stroke-width: 3; }
.yl path { fill: none; stroke: #f0d000; stroke-width: 3; }
.axs path { fill: none; stroke-width: 4; }
.ax-r { stroke: #c81010; }
.ax-g { stroke: #10a020; }
.ax-b { stroke: #1030c0; }
.lb { font: 700 18px "Liberation Sans", sans-serif; }
.lb-b { fill: #a4dff5; }
.lb-y { fill: #f2e67c; }
.lb-o { fill: #f7cf90; }
.lb-r { fill: #f29a90; }
.lb-s { fill: #8fc8ea; }
.lb-p { fill: #8f8fd0; }
.lb-xr { fill: #d87070; }
.nd circle { fill: #0a6a6a; stroke: #7a1c10; stroke-width: 2; }
.axes { position: absolute; left: 21px; top: 448px; overflow: visible; }
.ax-t { font: 700 6px "Liberation Sans", sans-serif; }
.ax-tx { fill: #c83030; }
.ax-ty { fill: #20d020; }
.ax-tz { fill: #1818d8; }
.fig-bottom { position: absolute; left: 2px; bottom: 5px; line-height: 8px; white-space: nowrap; }

.vbar-view { width: 17px; }
.track { flex: 1; width: 100%; display: flex; flex-direction: column; justify-content: flex-end; }
.thumb-view { height: 16px; width: 15px; margin: 0 1px 4px; background: linear-gradient(90deg, #f5f5f5, #e0e0e0 50%, #c8c8c8); }
.vbar-view .arr-down { margin: 6px 0 7px; }
.status { height: 20px; flex: none; display: flex; align-items: center; font-family: Roboto, sans-serif; font-size: 11.700px; color: #444; background: linear-gradient(#d8dce2, #b3b8c0 60%, #a6abb3); position: relative; }
.st { height: 100%; display: flex; align-items: center; padding-left: 1px; border-left: 1px solid #8a8f97; flex: none; white-space: nowrap; }
.st-a { width: 621px; border-left: 0; }
.st-b { width: 426px; }
.st-c { width: 85px; padding-left: 4px; }
.st-d { flex: 1; padding-left: 4px; }
.rsz { position: absolute; right: 1px; bottom: 1px; }
```
